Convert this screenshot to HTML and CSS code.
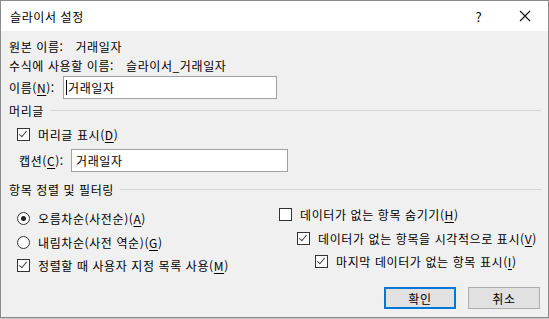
FILE: index.html
```html
<!DOCTYPE html>
<html lang="ko">
<head>
    <meta charset="UTF-8">
    <title>슬라이서 설정</title>
    <link rel="stylesheet" href="styles.css">
</head>
<body>
    <div class="dialog">
        <div class="titlebar">
            <span class="title">슬라이서 설정</span>
            <span class="tb-btn">?</span>
            <span class="tb-btn">
                <svg width="12" height="12" viewBox="0 0 12 12"><path d="M1 1 L11 11 M11 1 L1 11" stroke="#111" stroke-width="1.1" fill="none"/></svg>
            </span>
        </div>
        <div class="content">
            <div class="row info"><span class="key">원본 이름:</span>거래일자</div>
            <div class="row info"><span class="key">수식에 사용할 이름:</span>슬라이서_거래일자</div>
            <div class="row name-row">
                <label>이름(<u>N</u>):</label>
                <div class="field name-field"><span class="caret"></span>거래일자</div>
            </div>

            <div class="group-head"><span>머리글</span><i></i></div>
            <div class="row indent">
                <span class="check on"></span>머리글 표시(<u>D</u>)
            </div>
            <div class="row caption-row">
                <label>캡션(<u>C</u>):</label>
                <div class="field caption-field">거래일자</div>
            </div>

            <div class="group-head second"><span>항목 정렬 및 필터링</span><i></i></div>
            <div class="sorting">
                <div class="col left">
                    <div class="opt"><span class="radio on"></span>오름차순(사전순)(<u>A</u>)</div>
                    <div class="opt"><span class="radio"></span>내림차순(사전 역순)(<u>G</u>)</div>
                    <div class="opt"><span class="check on"></span>정렬할 때 사용자 지정 목록 사용(<u>M</u>)</div>
                </div>
                <div class="col right">
                    <div class="opt"><span class="check"></span>데이터가 없는 항목 숨기기(<u>H</u>)</div>
                    <div class="opt lv1"><span class="check on"></span>데이터가 없는 항목을 시각적으로 표시(<u>V</u>)</div>
                    <div class="opt lv2"><span class="check on"></span>마지막 데이터가 없는 항목 표시(<u>I</u>)</div>
                </div>
            </div>

            <div class="buttons">
                <button class="btn default">확인</button>
                <button class="btn">취소</button>
            </div>
        </div>
    </div>
</body>
</html>
```

FILE: styles.css
```css
body { margin: 0; background: #c8c8c8; font-family: "Noto Sans CJK KR", "Noto Sans", sans-serif; font-size: 12px; color: #000; letter-spacing: 0.6px; }
.dialog { width: 547px; height: 316px; border: 1px solid #8a8a8a; background: #f0f0f0; }
.titlebar { height: 30px; background: #fff; display: flex; align-items: center; }
.title { flex: 1; padding-left: 9px; font-size: 12px; }
.tb-btn { width: 46px; height: 30px; display: flex; align-items: center; justify-content: center; font-size: 13px; }
.content { padding: 6px 0 0 8px; }
.row { display: flex; align-items: center; }
.info { height: 19px; }
.key { margin-right: 12px; }
.name-row { margin-top: 1px; height: 23px; }
.name-row label { width: 54px; }
.field { height: 21px; border: 1px solid #a0a0a0; background: #fff; display: flex; align-items: center; padding-left: 4px; box-sizing: content-box; }
.name-field { width: 210px; padding-left: 2px; }
.caret { width: 1px; height: 15px; background: #000; margin-right: 1px; }
.group-head { display: flex; align-items: center; height: 18px; margin-top: 2px; }
.group-head i { flex: 1; height: 1px; background: #d5d5d5; margin: 0 7px 0 6px; }
.group-head.second { margin-top: 8px; }
.row.indent { margin-top: 6px; height: 19px; padding-left: 8px; }
.caption-row { margin-top: 5px; height: 23px; padding-left: 10px; }
.caption-row label { width: 52px; }
.caption-field { width: 211px; }
u { text-decoration: underline; text-underline-offset: 2px; }
.opt { display: flex; align-items: center; height: 24px; white-space: nowrap; }
.check, .radio { width: 11px; height: 11px; border: 1px solid #333; background: #fff; margin-right: 8px; position: relative; flex: none; }
.check.on::after { content: ""; position: absolute; left: 3px; top: 0px; width: 3px; height: 7px; border: solid #444; border-width: 0 1.3px 1.3px 0; transform: rotate(40deg); }
.radio { border-radius: 50%; }
.radio.on::after { content: ""; position: absolute; left: 3px; top: 3px; width: 5px; height: 5px; border-radius: 50%; background: #222; }
.sorting { display: flex; margin-top: 8px; }
.col.left { width: 262px; padding-left: 8px; }
.col.left .opt:last-child { height: 22px; }
.col.right { margin-top: -4px; }
.col.right .opt:last-child { height: 23px; }
.lv1 { padding-left: 18px; }
.lv2 { padding-left: 36px; }
.buttons { display: flex; justify-content: flex-end; gap: 12px; margin-top: 11px; padding-right: 8px; }
.btn { width: 72px; height: 22px; font-family: inherit; font-size: 12px; letter-spacing: inherit; background: #e1e1e1; border: 1px solid #adadad; padding: 0; color: #000; }
.btn.default { border: 2px solid #0078d7; }
```
